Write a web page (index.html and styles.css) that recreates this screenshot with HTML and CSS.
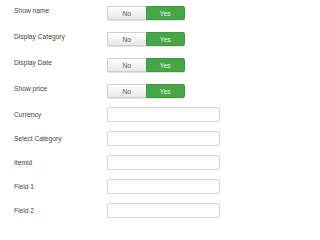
FILE: index.html
```html
<!DOCTYPE html>
<html>
<head>
<meta charset="utf-8">
<link rel="stylesheet" href="styles.css">
</head>
<body>
<form class="form">
  <div class="row row-toggle">
    <label class="label">Show name</label>
    <div class="toggle"><span class="opt opt-no">No</span><span class="opt opt-yes">Yes</span></div>
  </div>
  <div class="row row-toggle">
    <label class="label">Display Category</label>
    <div class="toggle"><span class="opt opt-no">No</span><span class="opt opt-yes">Yes</span></div>
  </div>
  <div class="row row-toggle">
    <label class="label">Display Date</label>
    <div class="toggle"><span class="opt opt-no">No</span><span class="opt opt-yes">Yes</span></div>
  </div>
  <div class="row row-toggle row-toggle-last">
    <label class="label">Show price</label>
    <div class="toggle"><span class="opt opt-no">No</span><span class="opt opt-yes">Yes</span></div>
  </div>
  <div class="row row-input">
    <label class="label">Currency</label>
    <input class="field" type="text">
  </div>
  <div class="row row-input">
    <label class="label">Select Category</label>
    <input class="field" type="text">
  </div>
  <div class="row row-input">
    <label class="label">Itemid</label>
    <input class="field" type="text">
  </div>
  <div class="row row-input">
    <label class="label">Field 1</label>
    <input class="field" type="text">
  </div>
  <div class="row row-input">
    <label class="label">Field 2</label>
    <input class="field" type="text">
  </div>
</form>
</body>
</html>
```
FILE: styles.css
```css
html, body {
  margin: 0;
  padding: 0;
  background: #fff;
}
body {
  font-family: "Liberation Sans", Arial, sans-serif;
  font-size: 6.7px;
  color: #444;
}
.form {
  padding: 6px 0 0 14px;
  display: flex;
  flex-direction: column;
}
.row {
  display: flex;
  align-items: flex-start;
}
.label {
  width: 93px;
  flex: none;
  line-height: 8px;
}
.row-toggle {
  height: 14px;
  margin-bottom: 12px;
}
.row-toggle .label {
  padding-top: 1px;
}
.row-toggle-last {
  margin-bottom: 9px;
}
.row-input {
  height: 15px;
  margin-bottom: 9px;
}
.row-input .label {
  padding-top: 4px;
}
.toggle {
  display: flex;
  width: 78px;
  height: 14px;
  border-radius: 2px;
  box-shadow: 0 1px 1px rgba(0,0,0,0.12);
}
.opt {
  flex: 1;
  display: flex;
  align-items: center;
  justify-content: center;
  box-sizing: border-box;
  font-size: 6.7px;
}
.opt-no {
  background: linear-gradient(#ffffff, #e8e8e8);
  border: 1px solid #cfcfcf;
  border-right: none;
  border-radius: 2px 0 0 2px;
  color: #555;
}
.opt-yes {
  background: #46a546;
  border: 1px solid #3f973f;
  border-radius: 0 2px 2px 0;
  color: #e8f5e8;
}
.field {
  box-sizing: border-box;
  width: 113px;
  height: 15px;
  margin: 0;
  padding: 0;
  border: 1px solid #d6d6d6;
  border-radius: 2px;
  background: #fff;
  box-shadow: inset 0 1px 1px rgba(0,0,0,0.05);
}
```
